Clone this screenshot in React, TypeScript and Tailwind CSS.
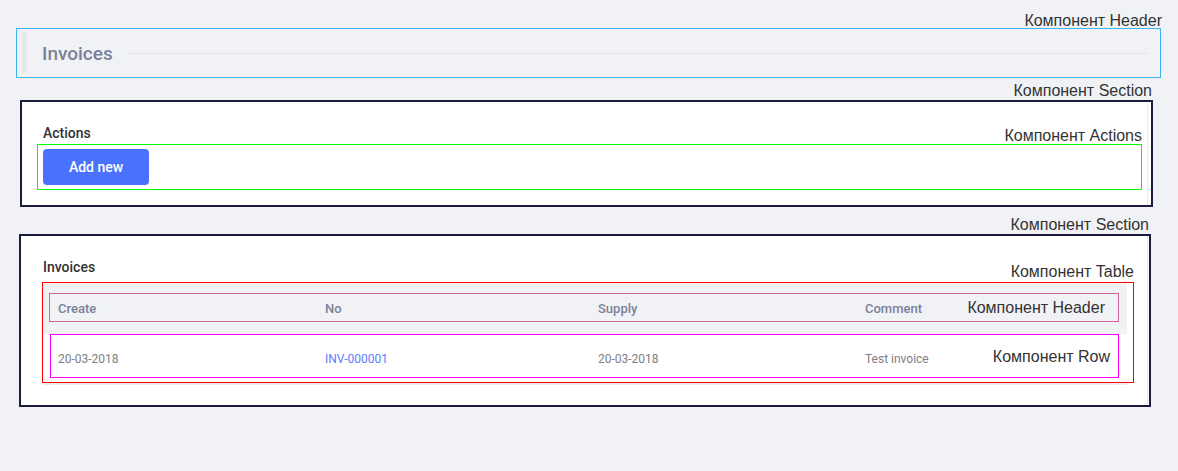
import React from "react";

const note = "font-['Liberation_Sans',Arial,sans-serif] text-[16px] leading-[16px] text-[#333333] whitespace-nowrap";

function Note({ children, className = "" }: { children: React.ReactNode; className?: string }) {
  return <div className={`${note} ${className}`}>{children}</div>;
}

export default function App() {
  return (
    <div className="w-[1178px] h-[471px] bg-[#f1f2f6] pt-[13px] font-['Roboto',sans-serif] overflow-hidden">
      {/* Page header */}
      <div className="ml-[16px] w-[1146px] flex justify-end">
        <Note>Компонент Header</Note>
      </div>
      <div className="ml-[16px] w-[1145px] h-[50px] -mt-px border border-[#3cb4ef] flex items-center pl-[5px] pr-[12px]">
        <div className="w-[5px] h-[40px] bg-[#e6e7eb]" />
        <div className="ml-[15px] text-[19px] leading-none font-medium text-[#7a8199]">Invoices</div>
        <div className="ml-[15px] flex-1 h-px bg-[#e3e4e9]" />
      </div>

      {/* Section 1 */}
      <div className="ml-[20px] w-[1133px] mt-[5px]">
        <div className="flex justify-end pr-[1px]">
          <Note>Компонент Section</Note>
        </div>
        <div className="mt-px h-[107px] border-2 border-[#1c1c3e] bg-white flex">
          <div className="flex-1 mr-[3px] border-r border-[#e7e8ec] pt-[23px] pl-[15px] pr-[5px]">
            <div className="flex justify-between items-end h-[19px]">
              <div className="ml-[6px] mb-[3px] text-[14px] leading-[16px] font-medium text-[#333333]">Actions</div>
              <Note>Компонент Actions</Note>
            </div>
            <div className="h-[46px] border border-[#00ff00] pl-[5px] pt-[4px]">
              <button className="h-[36px] w-[106px] rounded-[4px] bg-[#4b72fe] text-white text-[14px] font-medium flex items-center justify-center">
                Add new
              </button>
            </div>
          </div>
        </div>
      </div>

      {/* Section 2 */}
      <div className="ml-[19px] w-[1132px] mt-[10px]">
        <div className="flex justify-end pr-[2px]">
          <Note>Компонент Section</Note>
        </div>
        <div className="mt-px h-[173px] border-2 border-[#1c1c3e] bg-white flex">
          <div className="flex-1 mr-px border-r border-[#e7e8ec] pt-[23px] pl-[21px]">
            <div className="w-[1092px] flex justify-between items-end h-[21px]">
              <div className="ml-px mb-[5px] text-[14px] leading-[16px] font-medium text-[#333333]">Invoices</div>
              <Note>Компонент Table</Note>
            </div>
            <div className="mt-[2px] w-[1092px] h-[101px] border border-[#ff0000]">
              <div className="w-[1084px]">
                <div className="h-[51px] bg-[#f1f2f6] pt-[10px] pl-[6px] pr-[8px]">
                  <div className="h-[29px] border border-[#d0639a] flex items-center pl-[8px] pr-[13px]">
                    <div className="flex-1 grid grid-cols-[267px_273px_267px_1fr] text-[13px] leading-[16px] font-medium text-[#7b8199] mt-[2px]">
                      <div>Create</div>
                      <div>No</div>
                      <div>Supply</div>
                      <div>Comment</div>
                    </div>
                    <Note>Компонент Header</Note>
                  </div>
                </div>
                <div className="ml-[7px] w-[1069px] h-[44px] border border-[#ff00ff] pl-[7px] pr-[8px] pt-[14px] flex items-start">
                  <div className="flex-1 grid grid-cols-[267px_273px_267px_1fr] text-[12px] leading-[16px] text-[#7e7e84] mt-[2px]">
                    <div>20-03-2018</div>
                    <div className="text-[#5b7bfb]">INV-000001</div>
                    <div>20-03-2018</div>
                    <div>Test invoice</div>
                  </div>
                  <Note>Компонент Row</Note>
                </div>
              </div>
            </div>
            <div className="w-[1085px] h-[2px] bg-[#ececef]" />
          </div>
        </div>
      </div>
    </div>
  );
}
